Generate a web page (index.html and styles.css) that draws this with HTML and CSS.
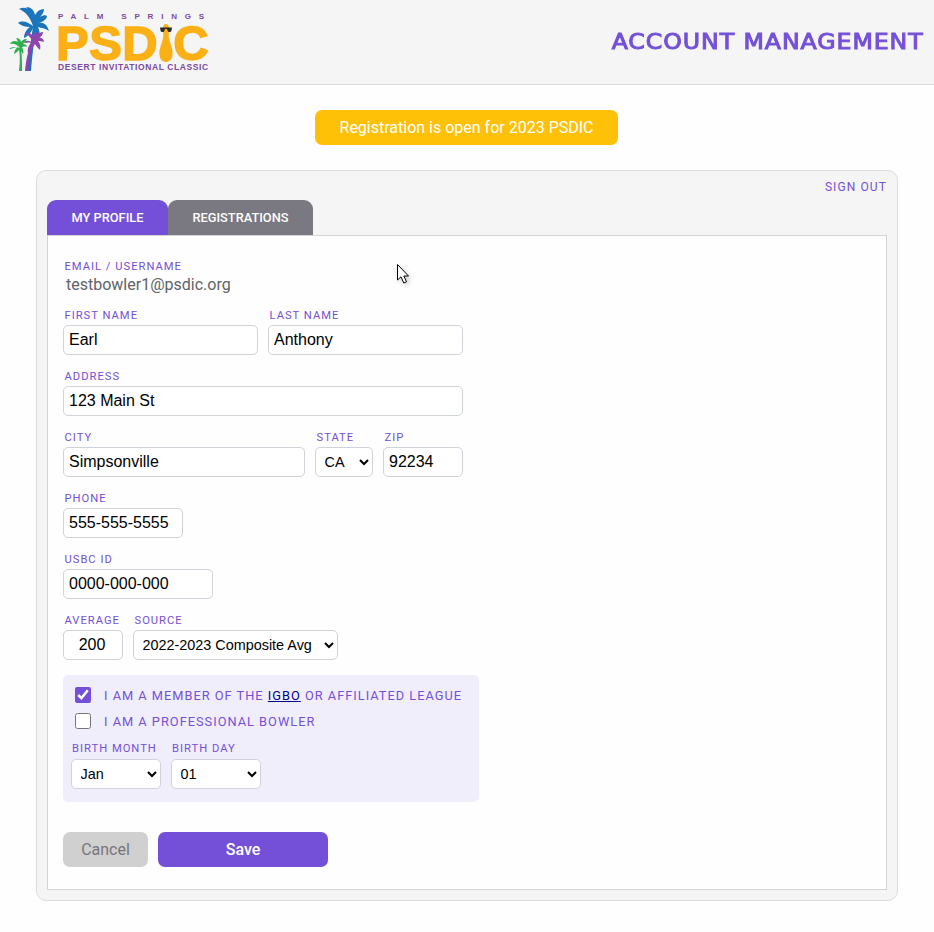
FILE: index.html
```html
<!DOCTYPE html>
<html lang="en">
<head>
<meta charset="utf-8">
<title>Account Management</title>
<link rel="stylesheet" href="styles.css">
</head>
<body>
<header class="site-header">
  <div class="brand">
    <svg class="palms" width="58" height="72" viewBox="0 0 58 72">
      <g fill="#1b75bb">
        <path d="M27 71 C29 56 31 40 33 26 L35.500 26 C34 42 32 58 31 71Z"/>
        <path d="M33 26 C30 17 26 12 19 9 C23 7 28 7 30 12 C29 12 28 9 26 7 C31 7 34 10 35 15 C37 11 40 9 44 9 C44 12 42 15 40 17 C43 15 46 15 47 16 C47 19 43 22 38 23 C43 22 47 24 49 31 C45 28 41 28 38 27 C40 31 40 35 39 39 C36 35 34 31 33 28 C31 33 27 37 24 38 C24 33 27 29 30 27 C26 27 22 26 18 23 C22 20 28 22 33 26Z"/>
      </g>
      <g fill="#8e44ad">
        <path d="M25 71 C26 60 28 50 32 42 L34 43 C31 50 29 60 28.500 71Z"/>
        <path d="M33 43 C31 38 29 35 25 33 C28 32 31 33 33 36 C33 34 34 32 36 31 C37 33 37 35 37 36 C38 33 41 32 43 32 C43 34 41 37 39 38 C41 37 44 39 44 42 C42 41 39 41 38 41 C40 43 41 47 40 50 C38 48 36 46 35 44 C33 47 31 51 28 53 C27 49 29 45 31 43 C28 42 26 43 24 43 C25 40 29 40 33 43Z"/>
      </g>
      <g fill="#2eb04f">
        <path d="M19 71 C20 62 20 56 19 49 L21 49 C22 56 22 63 22 71Z"/>
        <path d="M20 48 C17 44 13 43 10 44 C11 41 15 40 18 42 C17 40 17 39 16 38 C19 38 21 40 21 42 C23 39 25 39 27 39 C26 41 24 43 23 44 C25 44 27 45 27 47 C25 46 23 47 22 47 C23 49 24 52 23 54 C21 52 21 50 20 49 C18 51 16 53 14 54 C14 51 16 48 18 47 C15 47 12 49 9 49 C11 47 15 46 20 48Z"/>
      </g>
    </svg>
    <div class="brand-text">
      <div class="brand-top">PALM SPRINGS</div>
      <div class="brand-mark">
        <span class="brand-letters">PSD</span>
        <svg class="pin" width="14" height="38" viewBox="0 0 14 38" role="img" aria-label="I">
          <path fill="#fbb016" d="M7 0 C9.500 0 10.500 3 10 7 C9.500 11 9.500 13 11 18 C13 24 14 27 13.500 31 C13 36 10 38 7 38 C4 38 1 36 0.500 31 C0 27 1 24 3 18 C4.500 13 4.500 11 4 7 C3.500 3 4.500 0 7 0Z"/>
          <path fill="#2b2b2b" d="M1 3.500 H13 L12.500 6.500 C12 8.500 9 8.500 8.500 6.500 L8 5 H6 L5.500 6.500 C5 8.500 2 8.500 1.500 6.500Z"/>
        </svg>
        <span class="brand-letters">C</span>
      </div>
      <div class="brand-bottom">DESERT INVITATIONAL CLASSIC</div>
    </div>
  </div>
  <h1 class="page-title">ACCOUNT MANAGEMENT</h1>
</header>

<main class="page">
  <a class="banner" href="#">Registration is open for 2023 PSDIC</a>

  <section class="card">
    <div class="card-top"><a class="sign-out" href="#">SIGN OUT</a></div>
    <nav class="tabs">
      <a class="tab tab-active" href="#">MY PROFILE</a>
      <a class="tab tab-other" href="#">REGISTRATIONS</a>
    </nav>
    <form class="panel">
      <div class="field">
        <label class="label">EMAIL / USERNAME</label>
        <div class="static-value">testbowler1@psdic.org</div>
      </div>
      <div class="row w-400">
        <div class="field grow"><label class="label">FIRST NAME</label><input class="input" value="Earl"></div>
        <div class="field grow"><label class="label">LAST NAME</label><input class="input" value="Anthony"></div>
      </div>
      <div class="row w-400">
        <div class="field grow"><label class="label">ADDRESS</label><input class="input" value="123 Main St"></div>
      </div>
      <div class="row w-400">
        <div class="field grow"><label class="label">CITY</label><input class="input" value="Simpsonville"></div>
        <div class="field w-58"><label class="label">STATE</label><select class="select"><option>CA</option></select></div>
        <div class="field w-80"><label class="label">ZIP</label><input class="input" value="92234"></div>
      </div>
      <div class="row">
        <div class="field w-120"><label class="label">PHONE</label><input class="input" value="555-555-5555"></div>
      </div>
      <div class="row">
        <div class="field w-150"><label class="label">USBC ID</label><input class="input" value="0000-000-000"></div>
      </div>
      <div class="row">
        <div class="field w-60"><label class="label">AVERAGE</label><input class="input input-center" value="200"></div>
        <div class="field w-205"><label class="label">SOURCE</label><select class="select"><option>2022-2023 Composite Avg</option></select></div>
      </div>
      <div class="member-box">
        <label class="check-row"><input class="check" type="checkbox" checked><span>I AM A MEMBER OF THE <a class="igbo" href="#">IGBO</a> OR AFFILIATED LEAGUE</span></label>
        <label class="check-row"><input class="check" type="checkbox"><span>I AM A PROFESSIONAL BOWLER</span></label>
        <div class="row birth-row">
          <div class="field w-90"><label class="label label-birth">BIRTH MONTH</label><select class="select"><option>Jan</option></select></div>
          <div class="field w-90"><label class="label label-birth">BIRTH DAY</label><select class="select"><option>01</option></select></div>
        </div>
      </div>
      <div class="actions">
        <button class="btn btn-cancel" type="button">Cancel</button>
        <button class="btn btn-save" type="button">Save</button>
      </div>
    </form>
  </section>
</main>

<svg class="cursor" width="16" height="22" viewBox="0 0 16 22">
  <path fill="#fff" stroke="#000" stroke-width="1" d="M1.500 1.500 V17 L5 13.800 L7.800 20 L10.500 18.800 L7.800 13 H12.500Z"/>
</svg>
</body>
</html>
```
FILE: styles.css
```css
* { box-sizing: border-box; }
html, body { margin: 0; padding: 0; }
body {
  background: #fefefe;
  font-family: Roboto, "Liberation Sans", sans-serif;
  color: #000;
  position: relative;
  min-height: 932px;
}
a { text-decoration: none; }

.site-header {
  height: 85px;
  background: #f5f5f6;
  border-bottom: 1px solid #dcdcdc;
  display: flex;
  align-items: center;
  justify-content: space-between;
  padding: 0 10px 0 0;
}
.brand { display: flex; align-items: flex-start; height: 84px; }
.palms { display: block; flex: none; }
.brand-text { padding-top: 13px; width: 152px; }
.brand-top {
  font: 700 8px/8px "Liberation Sans", sans-serif;
  letter-spacing: 7.8px;
  color: #7d4a9e;
  white-space: nowrap;
}
.brand-mark { display: flex; align-items: center; height: 38px; margin: 3px 0 0 -2px; }
.brand-letters {
  font: 700 49px/38px "Liberation Sans", sans-serif;
  letter-spacing: 0.5px;
  color: #fbb016;
  -webkit-text-stroke: 1.500px #fbb016;
}
.pin { display: block; flex: none; margin: 0 0 0 1px; }
.brand-bottom {
  font: 700 8.500px/9px "Liberation Sans", sans-serif;
  letter-spacing: 0.6px;
  color: #7d4a9e;
  margin-top: 1px;
  white-space: nowrap;
}
.page-title {
  margin: 0;
  font: 400 21.500px/28px "DejaVu Sans", sans-serif;
  letter-spacing: 0.85px;
  color: #7450d8;
  -webkit-text-stroke: 1px #7450d8;
  white-space: nowrap;
  transform: scaleX(1.1);
  transform-origin: right center;
}

.page { display: flex; flex-direction: column; align-items: center; padding-top: 25px; }
.banner {
  display: block;
  width: 303px;
  height: 35px;
  margin-right: 1px;
  line-height: 35px;
  text-align: center;
  background: #ffc107;
  color: #fff;
  font-size: 16px;
  border-radius: 7px;
}

.card {
  width: 862px;
  height: 731px;
  margin-top: 25px;
  padding: 0 10px;
  background: #f5f5f6;
  border: 1px solid #dcdcdc;
  border-radius: 10px;
}
.card-top { display: flex; justify-content: flex-end; height: 29px; padding-top: 9px; }
.sign-out {
  font-size: 12px;
  line-height: 14px;
  letter-spacing: 1.1px;
  color: #7450d8;
}
.tabs { display: flex; height: 35px; }
.tab {
  display: flex;
  align-items: center;
  justify-content: center;
  height: 35px;
  font-size: 12.800px;
  font-weight: 500;
  color: #fff;
  border-radius: 9px 9px 0 0;
}
.tab-active { width: 121px; background: #7450d8; }
.tab-other { width: 145px; background: #7a7880; }

.panel {
  height: 655px;
  background: #fefefe;
  border: 1px solid #d4d4d4;
  padding: 23px 15px 0;
}
.field { display: flex; flex-direction: column; flex: none; }
.grow { flex: 1 1 0; min-width: 0; }
.label {
  display: block;
  height: 15px;
  margin-bottom: 2px;
  padding-left: 1.500px;
  font-size: 11.200px;
  line-height: 16px;
  letter-spacing: 1px;
  color: #7450d8;
  white-space: nowrap;
}
.static-value {
  height: 19px;
  margin-top: -1px;
  padding-left: 3px;
  font-size: 16px;
  line-height: 20px;
  color: #5f6368;
}
.row { display: flex; gap: 10px; margin-top: 14px; }
.w-400 { width: 400px; }
.w-58 { width: 58px; }
.w-60 { width: 60px; }
.w-80 { width: 80px; }
.w-90 { width: 90px; }
.w-120 { width: 120px; }
.w-150 { width: 150px; }
.w-205 { width: 205px; }
.input {
  display: block;
  width: 100%;
  height: 30px;
  padding: 0 5px;
  background: #fff;
  border: 1px solid #ced4da;
  border-radius: 5px;
  font: 16px "Liberation Sans", sans-serif;
  color: #000;
  outline: none;
}
.input-center { text-align: center; padding: 0 6px 0 4px; }
.select {
  display: block;
  width: 100%;
  height: 30px;
  padding: 0 0 0 4.500px;
  background: #fff;
  border: 1px solid #ced4da;
  border-radius: 5px;
  font: 14.400px "Liberation Sans", sans-serif;
  color: #000;
}
.member-box {
  width: 416px;
  height: 127px;
  margin-top: 15px;
  padding: 12px 8px 0;
  background: #f1eefc;
  border-radius: 5px;
}
.check-row {
  display: flex;
  align-items: center;
  height: 16px;
  margin-bottom: 10px;
  padding-left: 4px;
  font-size: 12.800px;
  letter-spacing: 1px;
  color: #7450d8;
  white-space: nowrap;
}
.check {
  width: 16px;
  height: 16px;
  margin: 0 13px 0 0;
  accent-color: #7450d8;
  flex: none;
}
.igbo { color: #00008b; text-decoration: underline; }
.birth-row { margin-top: 12px; margin-left: 0; }
.label-birth { padding-left: 1px; margin-bottom: 3px; }
.actions { display: flex; gap: 10px; margin-top: 30px; }
.btn {
  height: 35px;
  border: 0;
  border-radius: 7px;
  font: 16px Roboto, sans-serif;
}
.btn-cancel { width: 85px; background: #d0d0d0; color: #77757c; }
.btn-save { width: 170px; background: #7450d8; color: #fff; font-weight: 500; }
.cursor { position: absolute; left: 396px; top: 263px; filter: drop-shadow(2px 2px 2px rgba(0,0,0,.2)); }
```
